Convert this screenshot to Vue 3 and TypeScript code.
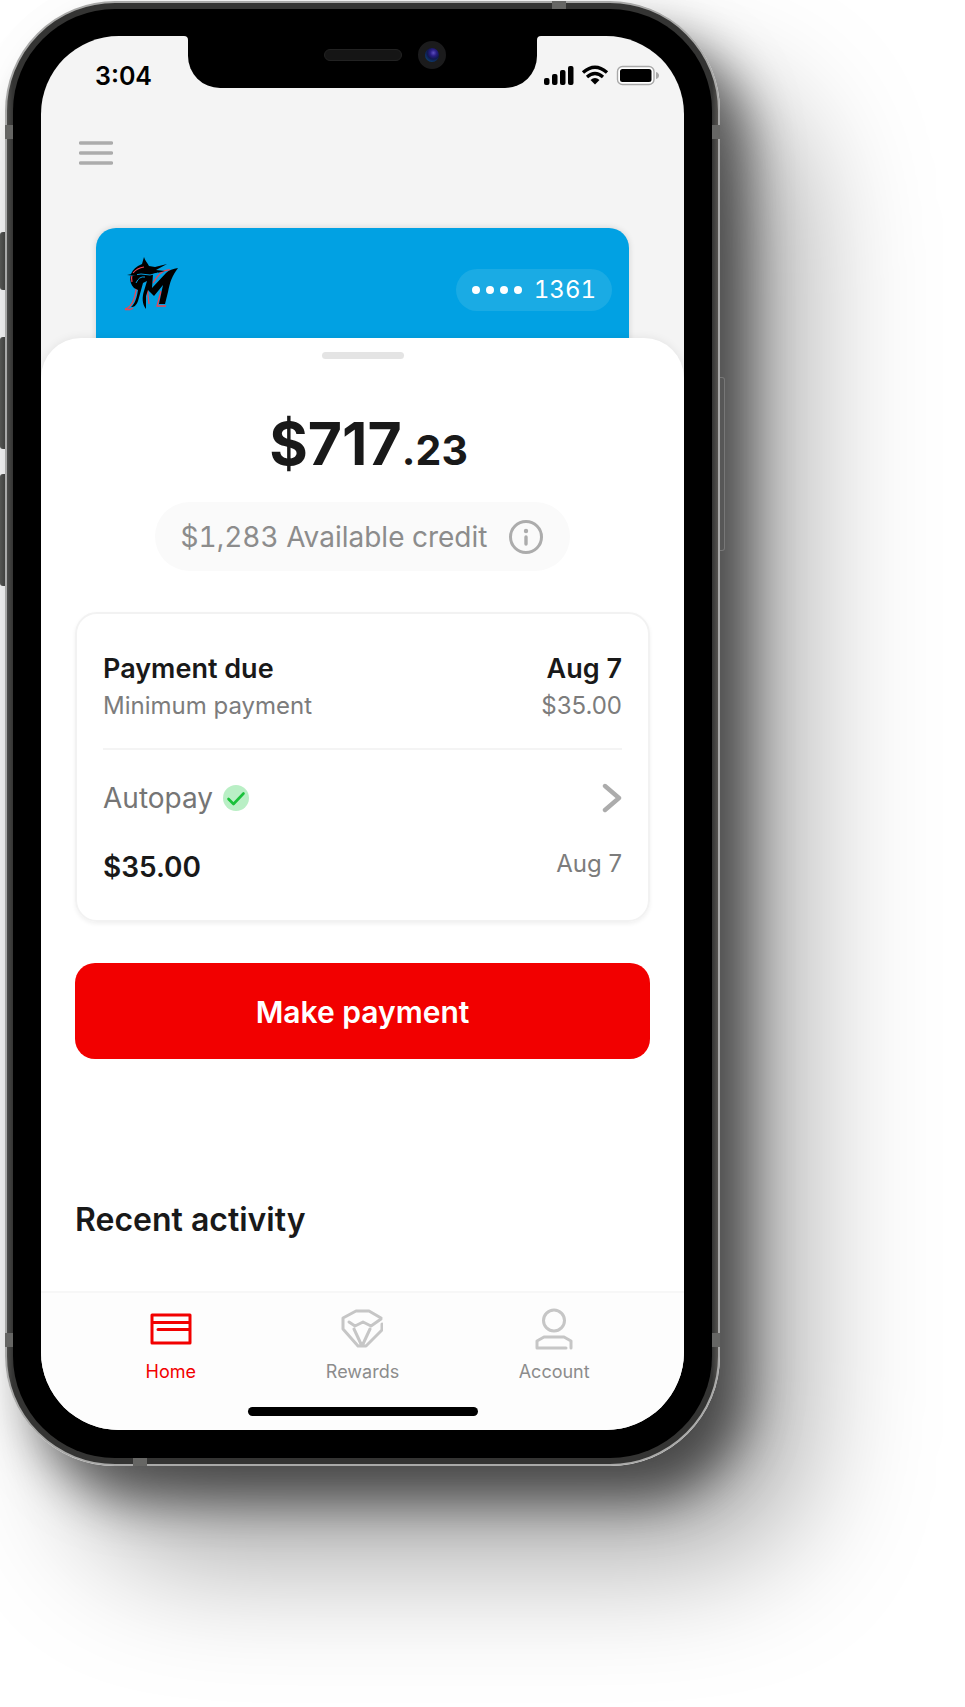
<script setup lang="ts">
interface Tab {
  id: string
  label: string
  active: boolean
}

const tabs: Tab[] = [
  { id: 'home', label: 'Home', active: true },
  { id: 'rewards', label: 'Rewards', active: false },
  { id: 'account', label: 'Account', active: false },
]
</script>

<template>
  <div class="stage">
    <div class="phone">
      <span class="key key-mute"></span>
      <span class="key key-up"></span>
      <span class="key key-down"></span>
      <span class="key key-power"></span>
      <div class="shell">
        <span class="band band-lt"></span>
        <span class="band band-rt"></span>
        <span class="band band-lb"></span>
        <span class="band band-rb"></span>
        <span class="band band-top"></span>
        <span class="band band-bottom"></span>
        <div class="bezel">
          <div class="screen">
            <div class="notch">
              <span class="speaker"></span>
              <span class="camera"></span>
              <svg class="flare flare-left" viewBox="0 0 4 4"><path d="M0 0H4V4Q4 0 0 0Z" /></svg>
              <svg class="flare flare-right" viewBox="0 0 4 4"><path d="M4 0H0V4Q0 0 4 0Z" /></svg>
            </div>
            <header class="status">
              <span class="time">3:04</span>
              <svg class="status-icons" viewBox="0 0 116 22" aria-hidden="true">
                <rect x="0" y="13" width="5.500" height="7" rx="2" />
                <rect x="8" y="9" width="5.500" height="11" rx="2" />
                <rect x="16" y="5" width="5.500" height="15" rx="2" />
                <rect x="24" y="1" width="5.500" height="19" rx="2" />
                <path d="M39 7.500Q51 -3 63 7.500" fill="none" stroke="#000" stroke-width="3.400" />
                <path d="M43 12Q51 5 59 12" fill="none" stroke="#000" stroke-width="3.300" />
                <path d="M46.500 15Q51 11 55.500 15L51 19.500Z" />
                <rect x="73.500" y="1.500" width="36.500" height="18" rx="5" fill="#fff" stroke="#a9a9a9" stroke-width="1.400" />
                <rect x="76" y="4" width="31.500" height="13" rx="2.500" />
                <path d="M112 7Q115 8 115 10.500T112 14Z" fill="#a9a9a9" />
              </svg>
            </header>

            <button class="menu" type="button" aria-label="Menu">
              <svg viewBox="0 0 34 24"><path d="M1.500 2H32.500M1.500 12H32.500M1.500 22H32.500" stroke="#acacac" stroke-width="3.400" stroke-linecap="round" /></svg>
            </button>

            <section class="card">
              <svg class="logo" viewBox="0 0 54 54" aria-hidden="true">
                <g fill="none" stroke="#ef4452" stroke-width="1.300">
                  <path d="M1 52C9 50 11 40 13 28" />
                  <path d="M1 52.500H6L9 51" />
                  <path d="M29 26C35 16 40 12 46 13" />
                  <path d="M37 34L33 49H42" />
                  <path d="M23 29L25 47" />
                </g>
                <path d="M7 50C11 47 13 40 14 33L10 31C4 25 5 14 14 9L18 7L20 0C21 4 23 5 25 9L31 10L43 7L32 13L41 14L29 17L28 31L42 16C45 13 49 12 54 11C48 19 46 25 44 35L41 47H35L39 28L30 39L24 33L22 39L22 52C18 47 18 40 20 34L23 24L19 26L14 44C12 49 10 50 7 50Z" />
                <path fill="none" stroke="#ef4452" stroke-width="1.200" d="M9 16Q13 11 20 10M8 25Q7 21 8 18" />
                <path fill="none" stroke="#01a1e3" stroke-width="1" d="M4 19L17 17L26 18L34 16M12 26Q15 19 21 20" />
                <path d="M3 18L13 16V19Z" />
              </svg>
              <div class="number"><i></i><i></i><i></i><i></i><span>1361</span></div>
            </section>

            <main class="sheet">
              <span class="handle"></span>
              <h1 class="balance">$717<small>.23</small></h1>
              <div class="credit">
                <span>$1,283 Available credit</span>
                <button type="button" class="info" aria-label="About available credit">
                  <svg viewBox="0 0 36 36">
                    <circle cx="18" cy="18" r="15.500" fill="none" stroke="#acacac" stroke-width="3" />
                    <circle cx="18" cy="12" r="2.200" fill="#acacac" />
                    <path d="M18 18V25" stroke="#acacac" stroke-width="3.400" stroke-linecap="round" />
                  </svg>
                </button>
              </div>

              <section class="panel">
                <div class="row strong"><span>Payment due</span><span>Aug 7</span></div>
                <div class="row light"><span>Minimum payment</span><span>$35.00</span></div>
                <hr />
                <button type="button" class="row autopay">
                  <span class="auto-label">
                    Autopay
                    <svg class="check" viewBox="0 0 26 26">
                      <circle cx="13" cy="13" r="13" fill="#b9efc5" />
                      <path d="M5.500 14L10.500 19L20.500 8.500" fill="none" stroke="#19c13a" stroke-width="2.600" stroke-linecap="round" stroke-linejoin="round" />
                    </svg>
                  </span>
                  <svg class="chevron" viewBox="0 0 20 30"><path d="M3 3L17 15L3 27" fill="none" stroke="#acacac" stroke-width="4.400" stroke-linecap="round" stroke-linejoin="round" /></svg>
                </button>
                <div class="row scheduled"><strong>$35.00</strong><span>Aug 7</span></div>
              </section>

              <button type="button" class="pay">Make payment</button>
              <h2 class="recent">Recent activity</h2>
            </main>

            <nav class="tabs">
              <a v-for="tab in tabs" :key="tab.id" href="#" class="tab" :class="{ active: tab.active }">
                <svg v-if="tab.id === 'home'" viewBox="0 0 42 42">
                  <path d="M2 7H40V35H2ZM2 14.500H40M8 21.500H39" />
                </svg>
                <svg v-else-if="tab.id === 'rewards'" viewBox="0 0 42 42">
                  <path d="M40 10L28 3H15L2 10V21L17 38H25L41 22V16M8 14L14 18L22 14L30 18L40 11M13 21L20 36M29 21L22 36" />
                </svg>
                <svg v-else viewBox="0 0 42 42">
                  <circle cx="21" cy="12.500" r="10.500" />
                  <path d="M33 40H4V33L11 29H31L38 33V40" />
                </svg>
                <span>{{ tab.label }}</span>
              </a>
            </nav>
            <span class="home-bar"></span>
          </div>
        </div>
      </div>
    </div>
  </div>
</template>

<style>
body {
  margin: 0;
  background: #fff;
}
</style>

<style scoped>
.stage {
  box-sizing: border-box;
  padding: 1px 245px 240px 5px;
  overflow: hidden;
  font-family: Inter, "Liberation Sans", sans-serif;
  color: #191919;
}
.stage * {
  box-sizing: border-box;
}
svg {
  display: block;
}
button {
  padding: 0;
  border: 0;
  background: none;
  font: inherit;
  color: inherit;
  cursor: pointer;
}
.phone {
  position: relative;
}
.shell {
  position: relative;
  padding: 6px;
  border: 2px solid #a9a9a8;
  border-radius: 110px;
  background: linear-gradient(90deg, #4c4c4a, #343433 6px, #343433 calc(100% - 6px), #555350);
  box-shadow:
    28px 34px 50px rgba(0, 0, 0, 0.58),
    80px 94px 130px rgba(0, 0, 0, 0.35);
}
.bezel {
  position: relative;
  padding: 27px 28px 28px;
  border-radius: 102px;
  background: #000;
}
.screen {
  position: relative;
  display: flex;
  flex-direction: column;
  border-radius: 78px;
  background: #f4f4f4;
  overflow: hidden;
}
.key {
  position: absolute;
  left: -5px;
  width: 6px;
  border-radius: 3px 0 0 3px;
  background: linear-gradient(90deg, #5c5d5a, #454543);
}
.key-mute { top: 231px; height: 58px; }
.key-up { top: 336px; height: 112px; }
.key-down { top: 473px; height: 112px; }
.key-power {
  left: auto;
  right: -5px;
  top: 376px;
  width: 5px;
  height: 174px;
  border: 1px solid #777;
  border-left: 0;
  border-radius: 0 3px 3px 0;
  background: #575757;
  z-index: 1;
}
.band {
  position: absolute;
  width: 8px;
  height: 14px;
  background: #666664;
}
.band-lt { left: -2px; top: 122px; }
.band-rt { right: -2px; top: 122px; }
.band-lb { left: -2px; bottom: 117px; }
.band-rb { right: -2px; bottom: 117px; }
.band-top { right: 152px; top: -2px; width: 14px; height: 8px; }
.band-bottom { left: 126px; bottom: -2px; width: 14px; height: 8px; }

.notch {
  position: absolute;
  top: 0;
  left: 50%;
  width: 349px;
  height: 52px;
  margin-left: -175px;
  border-radius: 0 0 32px 32px;
  background: #000;
}
.flare {
  position: absolute;
  top: 0;
  width: 4px;
  height: 4px;
}
.flare-left { left: -4px; }
.flare-right { right: -4px; }
.speaker {
  position: absolute;
  left: 136px;
  top: 13px;
  width: 78px;
  height: 12px;
  border: 1px solid #222;
  border-radius: 6px;
  background: #151515;
}
.camera {
  position: absolute;
  left: 230px;
  top: 5px;
  width: 28px;
  height: 28px;
  border: 7px solid #1b1b1c;
  border-radius: 50%;
  background: radial-gradient(circle at 60% 35%, #5d4fc0 0, #2a1d85 25%, #10184d 50%, #0b4a7c 85%);
}
.status {
  display: flex;
  align-items: center;
  justify-content: space-between;
  height: 80px;
  padding: 0 24px 0 54px;
}
.time {
  font-size: 25px;
  font-weight: 600;
  color: #000;
}
.status-icons {
  width: 116px;
  height: 22px;
}
.menu {
  width: 34px;
  height: 24px;
  margin: 25px 0 0 38px;
}
.card {
  display: flex;
  align-items: flex-start;
  justify-content: space-between;
  height: 150px;
  margin: 63px 55px 0;
  padding: 29px 17px 0 28px;
  border-radius: 20px;
  background: #01a1e3;
  box-shadow: 0 0 6px rgba(0, 0, 0, 0.14);
}
.logo {
  width: 54px;
  height: 54px;
}
.number {
  display: flex;
  align-items: center;
  gap: 6px;
  height: 42px;
  margin-top: 12px;
  padding: 0 16px;
  border-radius: 21px;
  background: #1aabe4;
  color: #fff;
  font-size: 24px;
  line-height: 32px;
  font-variant-numeric: tabular-nums;
}
.number i {
  width: 8px;
  height: 8px;
  border-radius: 50%;
  background: #fff;
}
.number span {
  margin-left: 6px;
}
.sheet {
  position: relative;
  display: flex;
  flex-direction: column;
  align-items: stretch;
  margin-top: -40px;
  padding: 14px 34px 48px;
  border-radius: 40px 40px 0 0;
  background: #fff;
  box-shadow: 0 0 10px rgba(0, 0, 0, 0.08);
}
.handle {
  align-self: center;
  width: 82px;
  height: 7px;
  border-radius: 4px;
  background: #e4e4e4;
}
.balance {
  margin: 49px 0 0;
  padding-left: 12px;
  text-align: center;
  font-size: 59px;
  line-height: 72px;
  font-weight: 700;
}
.balance small {
  font-size: 41px;
}
.credit {
  display: flex;
  align-items: center;
  align-self: center;
  gap: 21px;
  height: 69px;
  margin-top: 16px;
  padding: 0 26px;
  border-radius: 35px;
  background: #fafafa;
  color: #8c8c8c;
  font-size: 28px;
  font-variant-numeric: tabular-nums;
}
.info,
.info svg {
  width: 36px;
  height: 36px;
}
.panel {
  margin-top: 41px;
  padding: 37px 26px 32px;
  border: 2px solid #f2f2f2;
  border-radius: 22px;
  box-shadow: 0 2px 4px rgba(0, 0, 0, 0.06);
}
.row {
  display: flex;
  align-items: center;
  justify-content: space-between;
  width: 100%;
}
.strong {
  font-size: 27px;
  line-height: 36px;
  font-weight: 600;
}
.light {
  font-size: 24px;
  line-height: 38px;
  color: #7c7c7c;
}
hr {
  width: 100%;
  height: 2px;
  margin: 23px 0 30px;
  border: 0;
  background: #f4f4f4;
}
.autopay {
  color: #757575;
  font-size: 28px;
  line-height: 36px;
}
.auto-label {
  display: flex;
  align-items: center;
  gap: 10px;
}
.check {
  width: 26px;
  height: 26px;
}
.chevron {
  width: 20px;
  height: 30px;
}
.scheduled {
  align-items: flex-start;
  margin-top: 30px;
  font-size: 24px;
  line-height: 36px;
  color: #7c7c7c;
}
.scheduled strong {
  font-size: 28px;
  line-height: 42px;
  font-weight: 600;
  color: #191919;
}
.pay {
  height: 96px;
  margin-top: 41px;
  padding-top: 2px;
  border-radius: 20px;
  background: #f20000;
  color: #fff;
  font-size: 30px;
  font-weight: 600;
}
.recent {
  margin: 138px 0 0;
  font-size: 32px;
  line-height: 46px;
  font-weight: 600;
}
.tabs {
  position: relative;
  display: grid;
  grid-template-columns: repeat(3, 1fr);
  padding: 15px 34px 0;
  border-top: 2px solid #f7f7f7;
  background: #fdfdfd;
}
.tab {
  display: flex;
  flex-direction: column;
  align-items: center;
  gap: 10px;
  color: #8c8c8c;
  font-size: 18px;
  line-height: 24px;
  text-decoration: none;
}
.tab svg {
  width: 42px;
  height: 42px;
  fill: none;
  stroke: #c6c6c6;
  stroke-width: 3;
  stroke-linejoin: round;
  stroke-linecap: round;
}
.tab.active {
  color: #f20000;
}
.tab.active svg {
  stroke: #f20000;
}
.home-bar {
  padding: 23px 0 14px;
  background: #fdfdfd;
}
.home-bar::before {
  content: "";
  display: block;
  width: 230px;
  height: 9px;
  margin: 0 auto;
  border-radius: 5px;
  background: #000;
}
</style>
